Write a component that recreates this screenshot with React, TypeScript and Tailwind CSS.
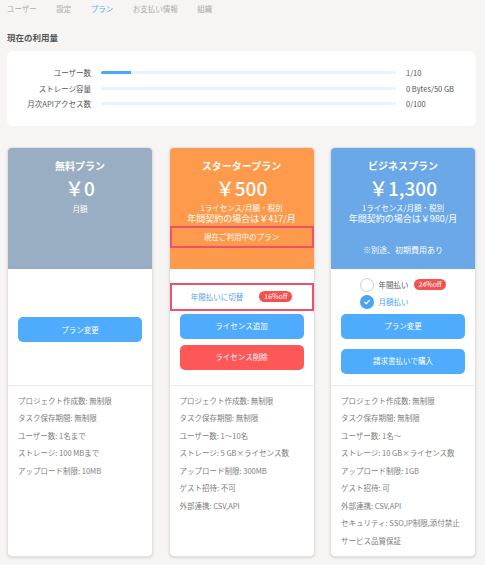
import React from "react";

const tabs = ["ユーザー", "設定", "プラン", "お支払い情報", "組織"];

const usage = [
    { label: "ユーザー数", value: "1/10", pct: 10 },
    { label: "ストレージ容量", value: "0 Bytes/50 GB", pct: 0 },
    { label: "月次APIアクセス数", value: "0/100", pct: 0 },
];

const freeFeatures = [
    "プロジェクト作成数: 無制限",
    "タスク保存期間: 無制限",
    "ユーザー数: 1名まで",
    "ストレージ: 100 MBまで",
    "アップロード制限: 10MB",
];

const starterFeatures = [
    "プロジェクト作成数: 無制限",
    "タスク保存期間: 無制限",
    "ユーザー数: 1〜10名",
    "ストレージ: 5 GB×ライセンス数",
    "アップロード制限: 300MB",
    "ゲスト招待: 不可",
    "外部連携: CSV,API",
];

const businessFeatures = [
    "プロジェクト作成数: 無制限",
    "タスク保存期間: 無制限",
    "ユーザー数: 1名〜",
    "ストレージ: 10 GB×ライセンス数",
    "アップロード制限: 1GB",
    "ゲスト招待: 可",
    "外部連携: CSV,API",
    "セキュリティ: SSO,IP制限,添付禁止",
    "サービス品質保証",
];

const Btn = ({ children, red }: { children: React.ReactNode; red?: boolean }) => (
    <button
        className={`w-full h-[25px] rounded-[5px] text-white text-[7.5px] ${red ? "bg-[#fe5757]" : "bg-[#4fabfd]"}`}
    >
        {children}
    </button>
);

const Features = ({ items }: { items: string[] }) => (
    <ul className="flex-1 border-t border-[#ebebeb] px-[10px] pt-[6px] pb-[7px] text-[7.5px] leading-[17.5px] text-[#7d7d7d]">
        {items.map((f) => (
            <li key={f}>{f}</li>
        ))}
    </ul>
);

const Pill = ({ children }: { children: React.ReactNode }) => (
    <span className="inline-flex items-center h-[11px] px-[5px] rounded-full bg-[#f4514f] text-white text-[7px] leading-none">
        {children}
    </span>
);

export default function App() {
    return (
        <div
            className="min-h-screen w-full bg-[#f6f5f3] pl-[7px] pr-[9px] pb-[8px]"
            style={{ fontFamily: '"Noto Sans CJK JP", "Noto Sans", sans-serif' }}
        >
            {/* Tabs */}
            <nav className="flex gap-[19.5px] pt-[3px] text-[7.5px] leading-[11px]">
                {tabs.map((t) => (
                    <span key={t} className={t === "プラン" ? "text-[#5aaaf5]" : "text-[#ababab]"}>
                        {t}
                    </span>
                ))}
            </nav>

            <h2 className="mt-[17px] text-[8.5px] leading-[12px] font-bold text-[#555]">現在の利用量</h2>

            {/* Usage */}
            <div className="mt-[8px] bg-white rounded-[6px] px-[10px] py-[14px]">
                <div className="grid grid-cols-[74px_1fr_60px] gap-x-[10px] text-[7.5px] leading-[15.5px] text-[#555] items-center">
                    {usage.map((u) => (
                        <React.Fragment key={u.label}>
                            <span className="text-right">{u.label}</span>
                            <div className="h-[3px] rounded-full bg-[#eaf3fc] overflow-hidden">
                                <div className="h-full bg-[#4aa8fb]" style={{ width: `${u.pct}%` }} />
                            </div>
                            <span>{u.value}</span>
                        </React.Fragment>
                    ))}
                </div>
            </div>

            {/* Plans */}
            <div className="mt-[21px] grid grid-cols-3 gap-[15.5px]">
                {/* Free */}
                <div className="flex flex-col bg-white rounded-[5px] border border-[#e2e2e2] overflow-hidden shadow-sm">
                    <div className="h-[121px] bg-[#9aaec3] text-white flex flex-col items-center pt-[11px]">
                        <div className="text-[10px] leading-[14px] font-bold">無料プラン</div>
                        <div className="mt-[4px] text-[19px] leading-[22px] font-medium">￥0</div>
                        <div className="mt-[5px] text-[7.5px] leading-[10px]">月額</div>
                    </div>
                    <div className="h-[116px] px-[10px] pt-[45px]">
                        <Btn>プラン変更</Btn>
                    </div>
                    <Features items={freeFeatures} />
                </div>

                {/* Starter */}
                <div className="flex flex-col bg-white rounded-[5px] border border-[#e2e2e2] overflow-hidden shadow-sm">
                    <div className="h-[121px] bg-[#fe9a4b] text-white flex flex-col items-center pt-[11px]">
                        <div className="text-[10px] leading-[14px] font-bold">スタータープラン</div>
                        <div className="mt-[4px] text-[19px] leading-[22px] font-medium">￥500</div>
                        <div className="mt-[4px] text-[7.5px] leading-[10px]">1ライセンス/月額・税別</div>
                        <div className="text-[9px] leading-[12px]">年間契約の場合は￥417/月</div>
                        <div className="mt-[1px] w-full h-[22px] border-2 border-[#f2506a] flex items-center justify-center text-[7.5px]">
                            現在ご利用中のプラン
                        </div>
                    </div>
                    <div className="h-[116px] flex flex-col">
                        <div className="mt-[14px] h-[28px] border-2 border-[#f2506a] flex items-center justify-center gap-[16px]">
                            <span className="text-[7.5px] text-[#5a9fe8]">年間払いに切替</span>
                            <Pill>16%off</Pill>
                        </div>
                        <div className="px-[10px] mt-[3px] flex flex-col gap-[6px]">
                            <Btn>ライセンス追加</Btn>
                            <Btn red>ライセンス削除</Btn>
                        </div>
                    </div>
                    <Features items={starterFeatures} />
                </div>

                {/* Business */}
                <div className="flex flex-col bg-white rounded-[5px] border border-[#e2e2e2] overflow-hidden shadow-sm">
                    <div className="h-[121px] bg-[#6aa8e8] text-white flex flex-col items-center pt-[11px]">
                        <div className="text-[10px] leading-[14px] font-bold">ビジネスプラン</div>
                        <div className="mt-[4px] text-[19px] leading-[22px] font-medium">￥1,300</div>
                        <div className="mt-[4px] text-[7.5px] leading-[10px]">1ライセンス/月額・税別</div>
                        <div className="text-[9px] leading-[12px]">年間契約の場合は￥980/月</div>
                        <div className="mt-[19px] text-[8px] leading-[11px]">※別途、初期費用あり</div>
                    </div>
                    <div className="h-[116px] flex flex-col">
                        <div className="mt-[9px] flex justify-center">
                            <div className="flex flex-col gap-[3px]">
                                <div className="flex items-center gap-[5px]">
                                    <span className="w-[14px] h-[14px] rounded-full border border-[#cfcfcf] bg-white" />
                                    <span className="text-[7.5px] text-[#555]">年間払い</span>
                                    <Pill>24%off</Pill>
                                </div>
                                <div className="flex items-center gap-[5px]">
                                    <span className="w-[14px] h-[14px] rounded-full bg-[#4aa3f5] flex items-center justify-center">
                                        <svg width="8" height="8" viewBox="0 0 10 10" fill="none" stroke="white" strokeWidth={1.6} strokeLinecap="round" strokeLinejoin="round">
                                            <path d="M2 5.2l2 2L8 3" />
                                        </svg>
                                    </span>
                                    <span className="text-[7.5px] text-[#4aa3f5]">月額払い</span>
                                </div>
                            </div>
                        </div>
                        <div className="px-[10px] mt-[5px] flex flex-col gap-[10px]">
                            <Btn>プラン変更</Btn>
                            <Btn>請求書払いで購入</Btn>
                        </div>
                    </div>
                    <Features items={businessFeatures} />
                </div>
            </div>
        </div>
    );
}
